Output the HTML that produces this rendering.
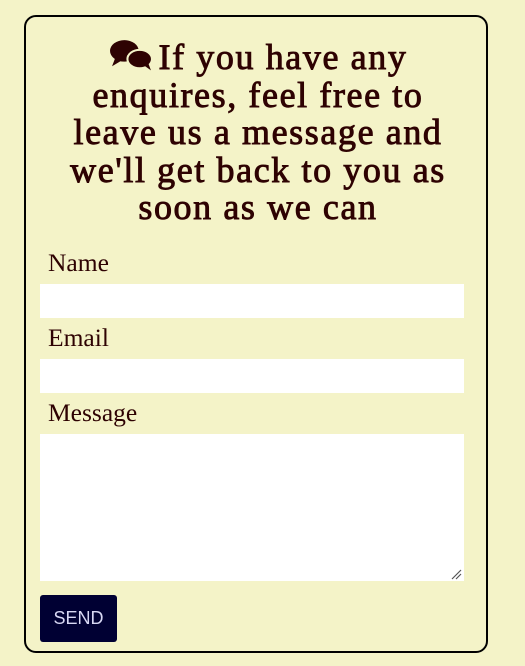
<!DOCTYPE html>
<html><head><style>
html,body{margin:0;padding:0;background:#f4f3c8;width:525px;height:666px;overflow:hidden}
.box{position:absolute;left:24px;top:15px;width:460px;height:634px;border:2px solid #000;border-radius:12px;box-sizing:content-box}
h1{position:absolute;left:-10px;top:20px;width:484px;margin:0;text-align:center;font-family:"Liberation Serif",serif;font-weight:normal;font-size:36px;line-height:37.5px;color:#2e0202;letter-spacing:1.6px;-webkit-text-stroke:0.9px #2e0202}
.lbl{position:absolute;left:48px;font-family:"Liberation Serif",serif;font-size:25.5px;color:#2e0202}
.in{position:absolute;left:40px;width:424px;background:#fff}
.btn{position:absolute;left:40px;top:595px;width:77px;height:47px;background:#000033;border-radius:3px;color:#d8d8f4;font-family:"Liberation Sans",sans-serif;font-size:18px;text-align:center;line-height:47px}
</style></head><body>
<div class="box">
<h1><svg width="44" height="36" viewBox="0 0 43 32" style="vertical-align:-4px;margin-right:6px"><ellipse cx="15" cy="12" rx="14" ry="10.5" fill="#2e0202"/><path d="M6 19 L3 27 L13 21Z" fill="#2e0202"/><ellipse cx="30" cy="20" rx="12" ry="9" fill="#2e0202" stroke="#f4f3c8" stroke-width="2"/><path d="M34 26 L41 31 L38 23Z" fill="#2e0202"/></svg>If you have any<br>enquires, feel free to<br>leave us a message and<br>we'll get back to you as<br>soon as we can</h1>
</div>
<div class="lbl" style="top:248px">Name</div>
<div class="in" style="top:284px;height:34px"></div>
<div class="lbl" style="top:323px">Email</div>
<div class="in" style="top:359px;height:34px"></div>
<div class="lbl" style="top:398px">Message</div>
<div class="in" style="top:434px;height:147px"><svg width="12" height="12" style="position:absolute;right:2px;bottom:1px"><path d="M2 11 L11 2 M6 11 L11 6" stroke="#555" stroke-width="1.2"/></svg></div>
<div class="btn">SEND</div>
</body></html>
